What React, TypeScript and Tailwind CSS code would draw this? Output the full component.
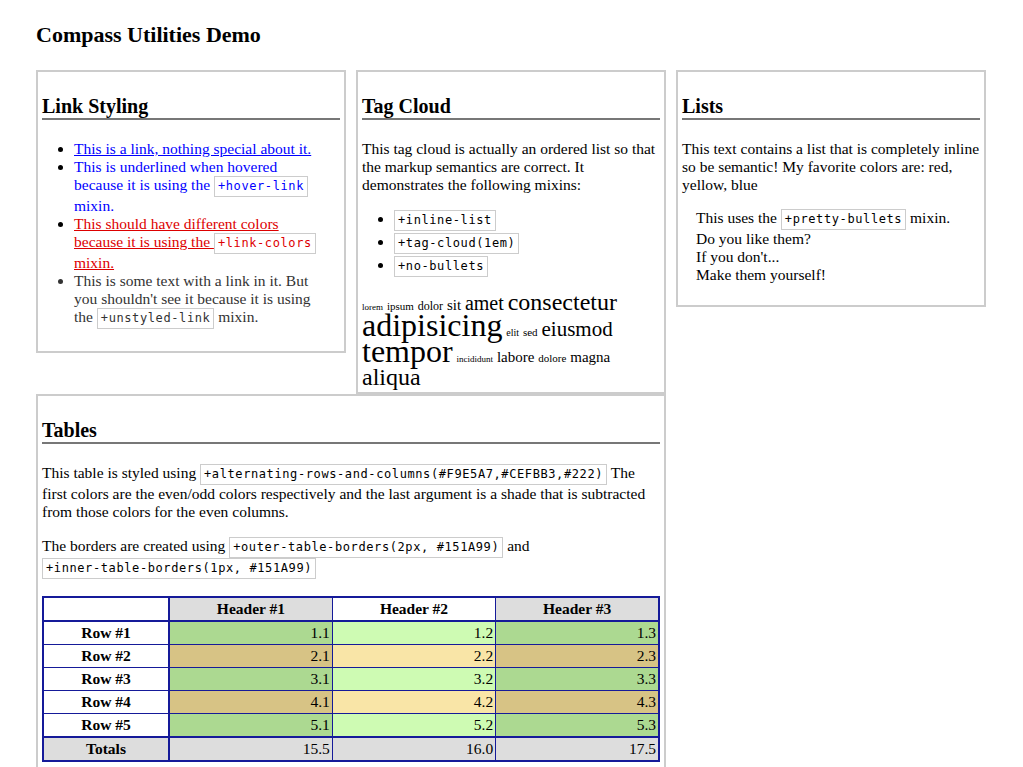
import React from "react";

// Shared inline code chip
const Code = ({ children }: { children: React.ReactNode }) => (
  <code className="inline-block border border-[#ccc] px-[3px] py-[2px] font-['DejaVu_Sans_Mono',monospace] text-[12px] leading-[15px] tracking-[0.6px]">
    {children}
  </code>
);

const Box = ({
  title,
  width = "w-[310px]",
  children,
}: {
  title: string;
  width?: string;
  children: React.ReactNode;
}) => (
  <div className={`${width} border-2 border-[#ccc] p-[4px]`}>
    <h2 className="mt-[19px] mb-[20px] border-b-2 border-[#777] text-[20px] font-bold leading-[23px]">
      {title}
    </h2>
    {children}
  </div>
);

// Tag cloud words with their sizes
const tags: [string, string][] = [
  ["lorem", "text-[9px]"],
  ["ipsum", "text-[11px]"],
  ["dolor", "text-[12px]"],
  ["sit", "text-[15px]"],
  ["amet", "text-[20px]"],
  ["consectetur", "text-[24px]"],
  ["adipisicing", "text-[32px]"],
  ["elit", "text-[10px]"],
  ["sed", "text-[11px]"],
  ["eiusmod", "text-[21px]"],
  ["tempor", "text-[32px]"],
  ["incididunt", "text-[9px]"],
  ["labore", "text-[15px]"],
  ["dolore", "text-[11px]"],
  ["magna", "text-[15px]"],
  ["aliqua", "text-[24px]"],
];

const rows = [
  ["1.1", "1.2", "1.3"],
  ["2.1", "2.2", "2.3"],
  ["3.1", "3.2", "3.3"],
  ["4.1", "4.2", "4.3"],
  ["5.1", "5.2", "5.3"],
];

const cellColor = (row: number, col: number) => {
  const odd = row % 2 === 0;
  if (col === 1) return odd ? "bg-[#CEFBB3]" : "bg-[#F9E5A7]";
  return odd ? "bg-[#ACD991]" : "bg-[#D7C385]";
};

const App: React.FC = () => {
  return (
    <div className="min-h-screen bg-white pl-[36px] pt-[22px] font-['Liberation_Serif',serif] text-[15.5px] leading-[18px] text-black">
      <h1 className="text-[22px] font-bold leading-[25px]">Compass Utilities Demo</h1>

      <div className="mt-[23px] flex w-[950px] flex-wrap items-start gap-x-[10px]">
        {/* Link styling */}
        <Box title="Link Styling">
          <ul className="mb-[18px] list-disc pl-[32px] pr-[18px]">
            <li>
              <a href="#" className="text-[#00f] underline">
                This is a link, nothing special about it.
              </a>
            </li>
            <li>
              <a href="#" className="text-[#00f]">
                This is underlined when hovered because it is using the <Code>+hover-link</Code> mixin.
              </a>
            </li>
            <li>
              <a href="#" className="text-[#d00] underline">
                This should have different colors because it is using the <Code>+link-colors</Code> mixin.
              </a>
            </li>
            <li className="text-[#333]">
              This is some text with a link in it. But you shouldn't see it because it is using the{" "}
              <Code>+unstyled-link</Code> mixin.
            </li>
          </ul>
        </Box>

        {/* Tag cloud */}
        <Box title="Tag Cloud">
          <p>
            This tag cloud is actually an ordered list so that the markup semantics are correct. It demonstrates the
            following mixins:
          </p>
          <ul className="mt-[15px] mb-[15px] list-disc pl-[32px]">
            <li className="py-[1px]">
              <Code>+inline-list</Code>
            </li>
            <li className="py-[1px]">
              <Code>+tag-cloud(1em)</Code>
            </li>
            <li className="py-[1px]">
              <Code>+no-bullets</Code>
            </li>
          </ul>
          <ol className="-mb-[1px]">
            {tags.map(([word, size], i) => (
              <React.Fragment key={word}>
                <li className={`inline ${size}`}>{word}</li>
                {i < tags.length - 1 ? " " : null}
              </React.Fragment>
            ))}
          </ol>
        </Box>

        {/* Lists */}
        <Box title="Lists">
          <p>This text contains a list that is completely inline so be semantic! My favorite colors are: red, yellow, blue</p>
          <ul className="mt-[15px] mb-[17px] pl-[14px]">
            <li>
              This uses the <Code>+pretty-bullets</Code> mixin.
            </li>
            <li>Do you like them?</li>
            <li>If you don't...</li>
            <li>Make them yourself!</li>
          </ul>
        </Box>

        {/* Tables */}
        <Box title="Tables" width="w-[630px]">
          <p>
            This table is styled using <Code>+alternating-rows-and-columns(#F9E5A7,#CEFBB3,#222)</Code> The first colors
            are the even/odd colors respectively and the last argument is a shade that is subtracted from those colors for
            the even columns.
          </p>
          <p className="mt-[16px]">
            The borders are created using <Code>+outer-table-borders(2px, #151A99)</Code> and{" "}
            <Code>+inner-table-borders(1px, #151A99)</Code>
          </p>
          <table className="mt-[17px] mb-[14px] w-full table-fixed border-collapse border-2 border-[#151A99]">
            <thead>
              <tr>
                <th className="w-[126px] border border-r-2 border-b-2 border-[#151A99] bg-white py-[2px]"></th>
                <th className="border border-b-2 border-[#151A99] bg-[#ddd] py-[2px] text-center font-bold">Header #1</th>
                <th className="border border-b-2 border-[#151A99] bg-white py-[2px] text-center font-bold">Header #2</th>
                <th className="border border-b-2 border-[#151A99] bg-[#ddd] py-[2px] text-center font-bold">Header #3</th>
              </tr>
            </thead>
            <tbody>
              {rows.map((row, r) => (
                <tr key={r}>
                  <th className="border border-r-2 border-[#151A99] bg-white py-[2px] text-center font-bold">
                    Row #{r + 1}
                  </th>
                  {row.map((v, c) => (
                    <td
                      key={c}
                      className={`border border-[#151A99] py-[2px] pr-[2px] text-right ${cellColor(r, c)}`}
                    >
                      {v}
                    </td>
                  ))}
                </tr>
              ))}
            </tbody>
            <tfoot>
              <tr className="bg-[#ddd]">
                <th className="border border-t-2 border-r-2 border-[#151A99] py-[2px] text-center font-bold">Totals</th>
                <td className="border border-t-2 border-[#151A99] py-[2px] pr-[2px] text-right">15.5</td>
                <td className="border border-t-2 border-[#151A99] py-[2px] pr-[2px] text-right">16.0</td>
                <td className="border border-t-2 border-[#151A99] py-[2px] pr-[2px] text-right">17.5</td>
              </tr>
            </tfoot>
          </table>
        </Box>
      </div>
    </div>
  );
};

export default App;
